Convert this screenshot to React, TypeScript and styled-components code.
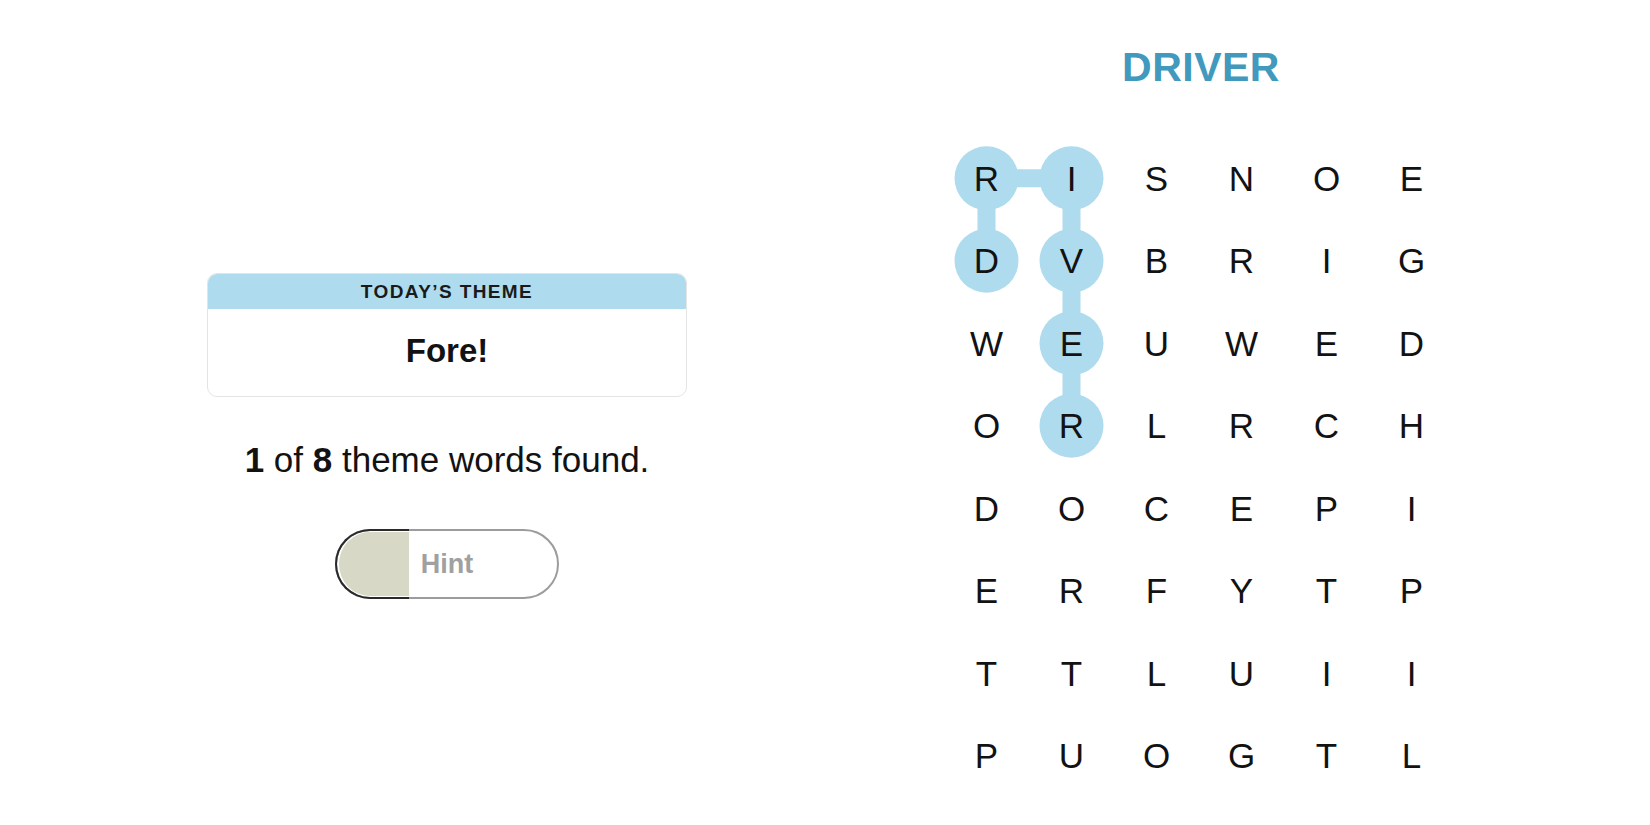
import React from "react";
import styled, { createGlobalStyle } from "styled-components";

const GlobalStyle = createGlobalStyle`
  html, body {
    margin: 0;
    padding: 0;
    background: #ffffff;
  }
  body {
    font-family: "Liberation Sans", Arial, sans-serif;
    color: #121212;
  }
`;

const colors = {
  highlight: "#aedcee",
  title: "#4199bd",
  text: "#121212",
  hintFill: "#d8d8c6",
  hintText: "#a0a0a0",
};

const board = [
  "RISNOE",
  "DVBRIG",
  "WEUWED",
  "ORLRCH",
  "DOCEPI",
  "ERFYTP",
  "TTLUII",
  "PUOGTL",
];

// the word in progress: [row, col]
const path: [number, number][] = [
  [1, 0],
  [0, 0],
  [0, 1],
  [1, 1],
  [2, 1],
  [3, 1],
];

const CELL_W = 85;
const CELL_H = 82.5;

const center = ([r, c]: [number, number]) => ({
  x: CELL_W / 2 + c * CELL_W,
  y: CELL_H / 2 + r * CELL_H,
});

export const App: React.FC = () => {
  const points = path.map(center);
  return (
    <>
      <GlobalStyle />
      <StyledPage>
        <StyledLeftColumn>
          <StyledThemeCard>
            <StyledThemeHeader>Today’s Theme</StyledThemeHeader>
            <StyledThemeTitle>Fore!</StyledThemeTitle>
          </StyledThemeCard>
          <StyledProgress>
            <b>1</b> of <b>8</b> theme words found.
          </StyledProgress>
          <StyledHintButton>
            <StyledHintFill />
            <StyledHintLabel>Hint</StyledHintLabel>
          </StyledHintButton>
        </StyledLeftColumn>

        <StyledRightColumn>
          <StyledWord>DRIVER</StyledWord>
          <StyledBoard>
            <StyledTrail
              width={CELL_W * 6}
              height={CELL_H * 8}
              viewBox={`0 0 ${CELL_W * 6} ${CELL_H * 8}`}
            >
              <polyline
                points={points.map((p) => `${p.x},${p.y}`).join(" ")}
                fill="none"
                stroke={colors.highlight}
                strokeWidth={18}
              />
              {points.map((p, i) => (
                <circle key={i} cx={p.x} cy={p.y} r={32} fill={colors.highlight} />
              ))}
            </StyledTrail>
            {board.map((row, r) =>
              row.split("").map((letter, c) => (
                <StyledCell key={`${r}-${c}`}>{letter}</StyledCell>
              ))
            )}
          </StyledBoard>
        </StyledRightColumn>
      </StyledPage>
    </>
  );
};

export default App;

const StyledPage = styled.div`
  display: flex;
  align-items: flex-start;
  padding-left: 207px;
  width: 1650px;
  height: 825px;
  box-sizing: border-box;
  overflow: hidden;
`;

const StyledLeftColumn = styled.div`
  width: 480px;
  padding-top: 273px;
  display: flex;
  flex-direction: column;
  align-items: center;
`;

const StyledThemeCard = styled.div`
  width: 100%;
  height: 124px;
  box-sizing: border-box;
  border: 1px solid #e4e4e4;
  border-radius: 10px;
  overflow: hidden;
  display: flex;
  flex-direction: column;
`;

const StyledThemeHeader = styled.div`
  height: 35px;
  background-color: ${colors.highlight};
  display: flex;
  align-items: center;
  justify-content: center;
  text-transform: uppercase;
  font-size: 19px;
  font-weight: 700;
  letter-spacing: 1.4px;
  color: #1a1a1a;
`;

const StyledThemeTitle = styled.div`
  flex: 1;
  display: flex;
  align-items: center;
  justify-content: center;
  font-size: 33px;
  font-weight: 700;
  padding-bottom: 4px;
`;

const StyledProgress = styled.div`
  margin-top: 43px;
  font-size: 35px;
  line-height: 40px;
  color: ${colors.text};
  b {
    font-weight: 700;
  }
`;

const StyledHintButton = styled.button`
  position: relative;
  margin-top: 49px;
  width: 224px;
  height: 70px;
  box-sizing: border-box;
  border: 2px solid #9c9c9c;
  border-radius: 35px;
  background: #ffffff;
  padding: 0;
  display: flex;
  align-items: center;
  justify-content: center;
  font-family: "Liberation Sans", Arial, sans-serif;
`;

const StyledHintFill = styled.div`
  position: absolute;
  top: -2px;
  bottom: -2px;
  left: -2px;
  width: 74px;
  box-sizing: border-box;
  border: 2px solid #2a2a2a;
  border-right: none;
  border-radius: 35px 0 0 35px;
  padding: 1px 0 1px 2px;
  background: ${colors.hintFill};
  background-clip: content-box;
`;

const StyledHintLabel = styled.span`
  position: relative;
  font-size: 27px;
  font-weight: 700;
  color: ${colors.hintText};
`;

const StyledRightColumn = styled.div`
  margin-left: 257px;
  width: ${CELL_W * 6}px;
  padding-top: 47px;
  display: flex;
  flex-direction: column;
  align-items: center;
`;

const StyledWord = styled.div`
  font-size: 41px;
  line-height: 41px;
  font-weight: 700;
  color: ${colors.title};
  letter-spacing: 0.5px;
  padding-left: 4px;
`;

const StyledBoard = styled.div`
  position: relative;
  margin-top: 49px;
  display: grid;
  grid-template-columns: repeat(6, ${CELL_W}px);
  grid-template-rows: repeat(8, ${CELL_H}px);
`;

const StyledTrail = styled.svg`
  position: absolute;
  top: 0;
  left: 0;
  z-index: 0;
`;

const StyledCell = styled.div`
  position: relative;
  z-index: 1;
  display: flex;
  align-items: center;
  justify-content: center;
  font-size: 35px;
  line-height: 1;
  color: ${colors.text};
`;
